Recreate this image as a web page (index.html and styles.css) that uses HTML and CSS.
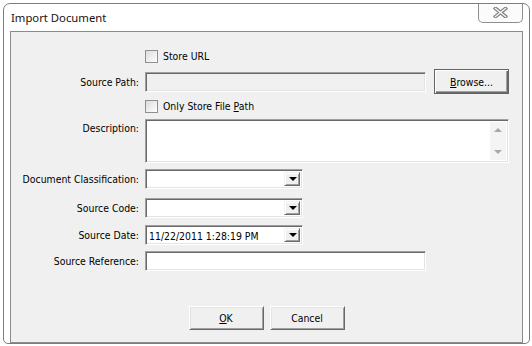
FILE: index.html
```html
<!DOCTYPE html>
<html>
<head>
<meta charset="utf-8">
<title>Import Document</title>
<link rel="stylesheet" href="styles.css">
</head>
<body>
<div class="window">
  <div class="titlebar">
    <span class="title">Import Document</span>
    <div class="close">
      <svg width="15" height="11" viewBox="0 0 15 11">
        <path d="M2.5 1.5 L12.5 9.5 M12.5 1.5 L2.5 9.5" stroke="#7b7b7b" stroke-width="3.6" stroke-linecap="square" fill="none"/>
        <path d="M2.5 1.5 L12.5 9.5 M12.5 1.5 L2.5 9.5" stroke="#f4f4f4" stroke-width="1.6" stroke-linecap="square" fill="none"/>
      </svg>
    </div>
  </div>
  <div class="client">
    <div class="row r-check1">
      <span class="label"></span>
      <span class="checkbox"></span><span class="checktext">Store URL</span>
    </div>
    <div class="row r-path">
      <span class="label">Source Path:</span>
      <span class="field disabled wide"></span>
      <span class="button default browse"><u>B</u>rowse...</span>
    </div>
    <div class="row r-check2">
      <span class="label"></span>
      <span class="checkbox"></span><span class="checktext">Only Store File <u>P</u>ath</span>
    </div>
    <div class="row r-desc">
      <span class="label desc-label">Description:</span>
      <div class="field memo">
        <div class="memo-text"></div>
        <div class="scrollbar">
          <span class="arrow-up"></span>
          <span class="arrow-down"></span>
        </div>
      </div>
    </div>
    <div class="row r-class">
      <span class="label">Document Classification:</span>
      <div class="field combo"><span class="combo-text"></span><span class="drop"><span class="tri"></span></span></div>
    </div>
    <div class="row r-code">
      <span class="label">Source Code:</span>
      <div class="field combo"><span class="combo-text"></span><span class="drop"><span class="tri"></span></span></div>
    </div>
    <div class="row r-date">
      <span class="label">Source Date:</span>
      <div class="field combo"><span class="combo-text">11/22/2011 1:28:19 PM</span><span class="drop"><span class="tri"></span></span></div>
    </div>
    <div class="row r-ref">
      <span class="label">Source Reference:</span>
      <span class="field wide"></span>
    </div>
    <div class="buttons">
      <span class="button"><u>O</u>K</span>
      <span class="button">Cancel</span>
    </div>
  </div>
</div>
</body>
</html>
```

FILE: styles.css
```css
html, body {
  margin: 0;
  padding: 0;
  background: #ffffff;
}
body {
  font-family: "DejaVu Sans Condensed", "DejaVu Sans", sans-serif;
  font-size: 10.4px;
  color: #000;
}
.window {
  margin: 3px 0 0 3px;
  width: 525px;
  height: 339px;
  border: 1px solid #7d7d7d;
  border-radius: 7px 7px 5px 5px;
  background: #ffffff;
  display: flex;
  flex-direction: column;
}
.titlebar {
  height: 28px;
  display: flex;
  align-items: flex-start;
}
.title {
  font-family: "Noto Sans", "Open Sans", sans-serif;
  font-size: 11.3px;
  padding-left: 7px;
  margin-top: 5px;
  line-height: 17px;
  color: #1a1212;
}
.close {
  margin-left: auto;
  margin-right: 6px;
  width: 43px;
  height: 18px;
  border: 1px solid #8e8e8e;
  border-top: none;
  border-radius: 0 0 5px 5px;
  background: #fbfbfb;
  display: flex;
  align-items: center;
  justify-content: center;
}
.close svg {
  display: block;
  margin-top: -2px;
}
.client {
  margin: 0 6px;
  height: 303px;
  border: 1px solid #8b8b8b;
  background: #f0f0f0;
  padding-top: 17px;
  box-sizing: content-box;
  display: flex;
  flex-direction: column;
}
.row {
  display: flex;
  align-items: center;
}
.label {
  width: 128px;
  margin-right: 6px;
  text-align: right;
  white-space: nowrap;
  flex: none;
}
.r-check1 { height: 14px; }
.r-path { height: 25px; margin-top: 6px; }
.r-check2 { height: 14px; margin-top: 5px; }
.r-desc { height: 44px; margin-top: 6px; align-items: flex-start; }
.r-class { height: 20px; margin-top: 6px; }
.r-code { height: 20px; margin-top: 9px; }
.r-date { height: 20px; margin-top: 7px; }
.r-ref { height: 20px; margin-top: 6px; }
.desc-label { margin-top: 3px; }

.checkbox {
  width: 11px;
  height: 11px;
  border: 1px solid #8e8f8f;
  background: linear-gradient(135deg, #dcdcdc, #ffffff);
  flex: none;
}
.checktext {
  margin-left: 5px;
}
.field {
  box-sizing: border-box;
  border: 1px solid;
  border-color: #a0a0a0 #ffffff #ffffff #a0a0a0;
  box-shadow: inset 1px 1px 0 #696969, inset -1px -1px 0 #e3e3e3;
  background: #ffffff;
  height: 20px;
  flex: none;
}
.field.disabled {
  background: #f0f0f0;
}
.wide {
  width: 281px;
}
.memo {
  width: 364px;
  height: 44px;
  display: flex;
  padding: 2px;
}
.memo-text {
  flex: 1;
}
.scrollbar {
  width: 16px;
  background: #f4f4f4;
  display: flex;
  flex-direction: column;
  align-items: center;
  justify-content: space-between;
  padding: 6px 0 6px;
}
.arrow-up {
  width: 0;
  height: 0;
  border-left: 4px solid transparent;
  border-right: 4px solid transparent;
  border-bottom: 4px solid #a8a8a8;
}
.arrow-down {
  width: 0;
  height: 0;
  border-left: 4px solid transparent;
  border-right: 4px solid transparent;
  border-top: 4px solid #a8a8a8;
}
.combo {
  width: 158px;
  display: flex;
  align-items: stretch;
  padding: 2px;
}
.combo-text {
  flex: 1;
  padding-left: 1px;
  line-height: 16px;
  white-space: nowrap;
  overflow: hidden;
}
.drop {
  width: 16px;
  flex: none;
  box-sizing: border-box;
  background: #f0f0f0;
  border: 1px solid;
  border-color: #f0f0f0 #696969 #696969 #f0f0f0;
  box-shadow: inset 1px 1px 0 #ffffff, inset -1px -1px 0 #a0a0a0;
  display: flex;
  align-items: center;
  justify-content: center;
}
.tri {
  width: 0;
  height: 0;
  border-left: 4px solid transparent;
  border-right: 4px solid transparent;
  border-top: 4px solid #000;
  margin-left: 1px;
}
.button {
  box-sizing: border-box;
  width: 75px;
  height: 24px;
  background: #f0f0f0;
  border: 1px solid;
  border-color: #ffffff #696969 #696969 #ffffff;
  box-shadow: inset 1px 1px 0 #e3e3e3, inset -1px -1px 0 #a0a0a0;
  display: flex;
  align-items: center;
  justify-content: center;
  flex: none;
}
.button.default {
  border: 1px solid #646464;
  box-shadow: inset 1px 1px 0 #ffffff, inset -1px -1px 0 #696969, inset -2px -2px 0 #a0a0a0;
}
.browse {
  height: 25px;
  margin-left: 8px;
}
.buttons {
  display: flex;
  justify-content: center;
  gap: 6px;
  margin-top: 35px;
}
```
